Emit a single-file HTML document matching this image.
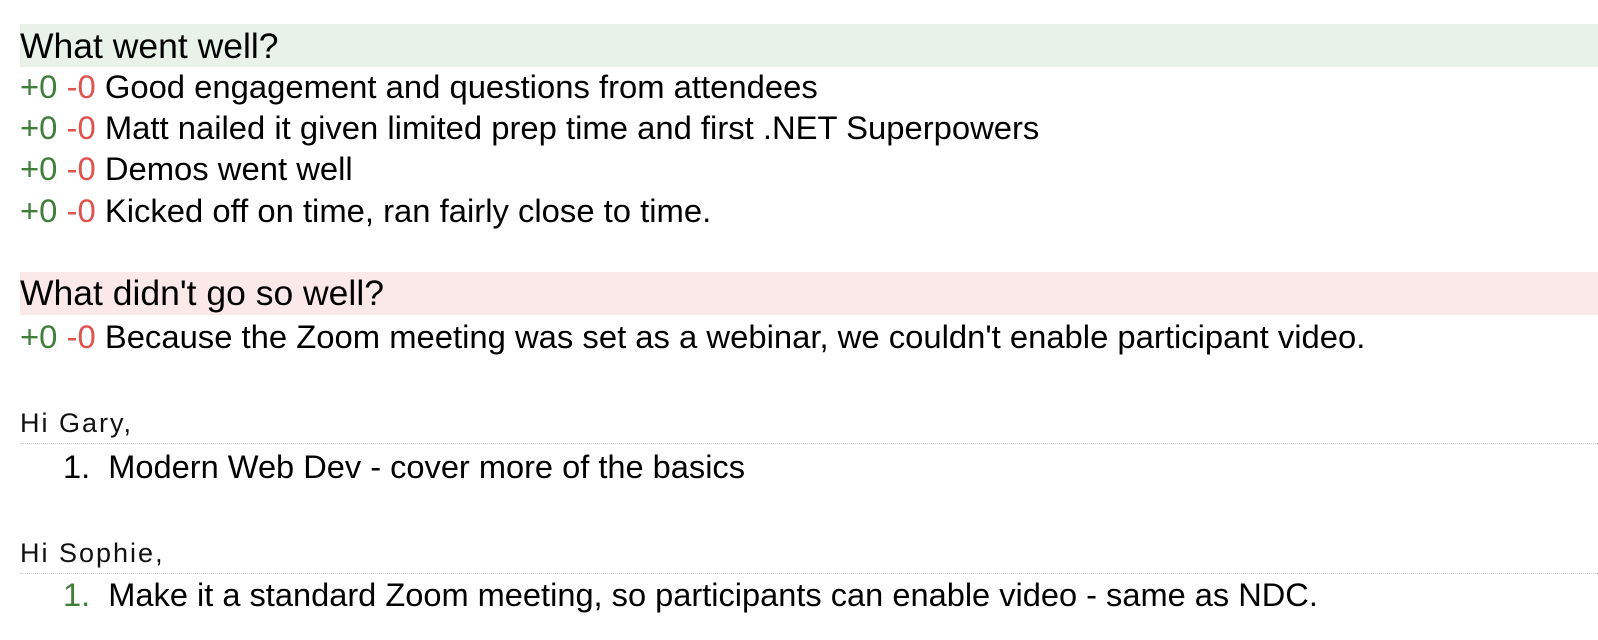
<!DOCTYPE html>
<html><head><style>
body{margin:0;width:1598px;height:640px;background:#fff;font-family:"Liberation Sans",Arial,sans-serif;color:#000;position:relative;overflow:hidden}
.a{position:absolute;left:20px;white-space:nowrap;font-size:32.8px;line-height:40px;height:40px}
.band{position:absolute;left:20px;right:0;height:43px}
.g{color:#3f7f3a}.r{color:#e0534d}
.hi{position:absolute;left:20px;font-size:27px;line-height:30px;color:#111;white-space:nowrap;letter-spacing:2px}
.hr{position:absolute;left:20px;right:0;border-top:1px dotted #ccc}
</style></head><body>
<div class="band" style="top:24px;background:#e8f2e8"></div>
<div class="band" style="top:272px;background:#fbe9ea"></div>
<div class="a" style="top:26px;font-size:35.5px">What went well?</div>
<div class="a" style="top:67px"><span class="g">+0</span> <span class="r">-0</span> Good engagement and questions from attendees</div>
<div class="a" style="top:108px"><span class="g">+0</span> <span class="r">-0</span> Matt nailed it given limited prep time and first .NET Superpowers</div>
<div class="a" style="top:149px"><span class="g">+0</span> <span class="r">-0</span> Demos went well</div>
<div class="a" style="top:191px"><span class="g">+0</span> <span class="r">-0</span> Kicked off on time, ran fairly close to time.</div>
<div class="a" style="top:273px;font-size:35.5px">What didn't go so well?</div>
<div class="a" style="top:317px"><span class="g">+0</span> <span class="r">-0</span> Because the Zoom meeting was set as a webinar, we couldn't enable participant video.</div>
<div class="hi" style="top:408px">Hi Gary,</div>
<div class="hr" style="top:443px"></div>
<div class="a" style="top:447px;left:63px;font-size:32.6px">1.&nbsp; Modern Web Dev - cover more of the basics</div>
<div class="hi" style="top:538px">Hi Sophie,</div>
<div class="hr" style="top:573px"></div>
<div class="a" style="top:575px;left:63px;font-size:32.6px"><span class="g">1.</span>&nbsp; Make it a standard Zoom meeting, so participants can enable video - same as NDC.</div>
</body></html>
